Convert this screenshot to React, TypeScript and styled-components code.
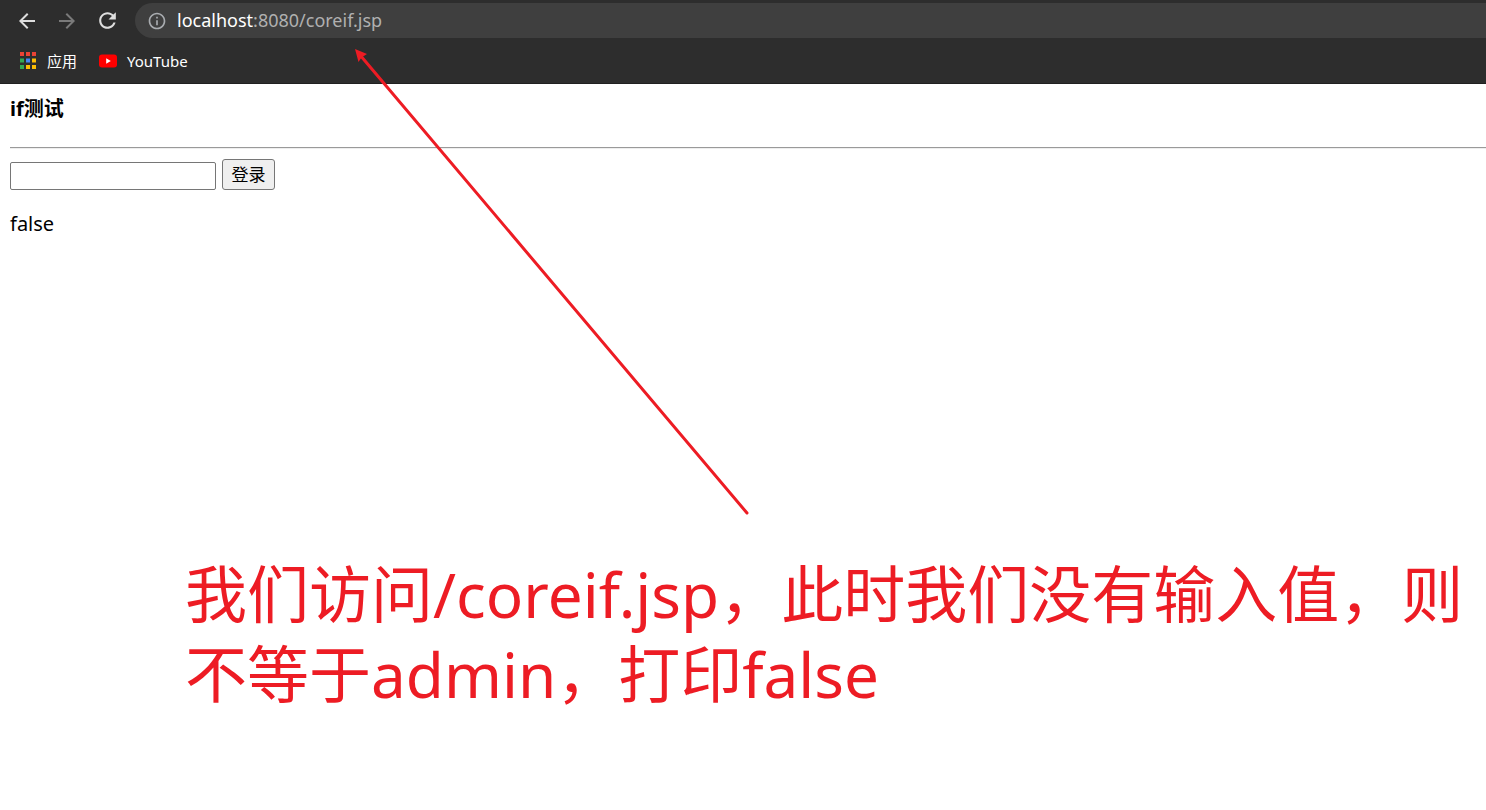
import React from "react";
import styled, { createGlobalStyle } from "styled-components";

const GlobalStyle = createGlobalStyle`
  * { box-sizing: border-box; }
  body {
    margin: 0;
    background: #ffffff;
    color: #000000;
    font-family: "Noto Sans", "Noto Sans CJK SC", sans-serif;
  }
`;

const Screen = styled.div`
  position: relative;
  min-height: 100vh;
  overflow: hidden;
`;

const BrowserChrome = styled.header`
  background: #2d2d2d;
  border-bottom: 1px solid #202020;
`;

const Toolbar = styled.div`
  display: flex;
  align-items: center;
  padding: 3px 0 0 7px;
`;

const ToolButton = styled.button<{ $muted?: boolean }>`
  display: grid;
  place-items: center;
  width: 40px;
  height: 35px;
  padding: 0;
  border: 0;
  background: none;
  color: ${(p) => (p.$muted ? "#7a7a7a" : "#dedede")};
`;

const Omnibox = styled.div`
  flex: 1;
  display: flex;
  align-items: center;
  gap: 10px;
  height: 35px;
  margin-left: 8px;
  padding-left: 12px;
  border-radius: 18px 0 0 18px;
  background: #3f3f3f;
  color: #a9acb0;
`;

const Url = styled.div`
  padding-bottom: 2px;
  color: #b0b0b0;
  font-size: 18px;
  line-height: 28px;
  outline: none;
`;

const Host = styled.span`
  color: #ffffff;
`;

const Bookmarks = styled.nav`
  display: flex;
  align-items: center;
  gap: 22px;
  height: 45px;
  padding-left: 19px;
`;

const Bookmark = styled.a`
  display: flex;
  align-items: center;
  gap: 10px;
  color: #ffffff;
  font-size: 15px;
  line-height: 28px;
  text-decoration: none;
`;

const Page = styled.main`
  padding: 11px 0 24px 10px;
`;

const Heading = styled.h3`
  margin: 0;
  font-size: 20px;
  line-height: 28px;
`;

const Rule = styled.hr`
  height: 2px;
  margin: 24px 0 10px;
  border: 0;
  border-top: 1px solid #9a9a9a;
  border-bottom: 1px solid #eeeeee;
`;

const LoginForm = styled.form`
  display: flex;
  align-items: flex-end;
  gap: 6px;
`;

const NameInput = styled.input`
  width: 206px;
  height: 28px;
  padding: 1px 4px;
  border: 1px solid #767676;
  border-radius: 2px;
  background: #ffffff;
  font: inherit;
`;

const SubmitButton = styled.button`
  width: 53px;
  height: 31px;
  padding: 0;
  border: 1px solid #767676;
  border-radius: 3px;
  background: #efefef;
  color: #000000;
  font-family: inherit;
  font-size: 17px;
  line-height: 28px;
`;

const Result = styled.p`
  margin: 20px 0 0;
  font-size: 20px;
  line-height: 28px;
`;

const Note = styled.p`
  margin: 316px 0 0;
  padding-left: 175px;
  color: #ed1c24;
  font-size: 62px;
  line-height: 80px;
  white-space: nowrap;
`;

const Pointer = styled.svg`
  position: absolute;
  left: 350px;
  top: 45px;
  pointer-events: none;
`;

const appDots = [
  ["#ea4335", "#ea4335", "#ea4335"],
  ["#34a853", "#4285f4", "#fbbc05"],
  ["#34a853", "#fbbc05", "#fbbc05"],
];

const AppsIcon = () => (
  <svg width="18" height="18" viewBox="0 0 18 18" aria-hidden="true">
    {appDots.map((row, y) =>
      row.map((fill, x) => (
        <rect key={`${x}-${y}`} x={1 + x * 6} y={y * 6.5} width="4" height="4" fill={fill} />
      ))
    )}
  </svg>
);

const YouTubeIcon = () => (
  <svg width="18" height="14" viewBox="0 0 18 14" aria-hidden="true">
    <rect width="18" height="13" y="0.5" rx="3" fill="#ff0000" />
    <path d="M7.2 4.3v5.4L11.8 7z" fill="#ffffff" />
  </svg>
);

export default function App() {
  return (
    <Screen lang="zh-CN">
      <GlobalStyle />
      <BrowserChrome>
        <Toolbar>
          <ToolButton aria-label="后退">
            <svg width="24" height="24" viewBox="0 0 24 24" fill="currentColor">
              <path d="M20 11H7.83l5.59-5.59L12 4l-8 8 8 8 1.41-1.41L7.83 13H20v-2z" />
            </svg>
          </ToolButton>
          <ToolButton aria-label="前进" $muted>
            <svg width="24" height="24" viewBox="0 0 24 24" fill="currentColor">
              <path d="M12 4l-1.41 1.41L16.17 11H4v2h12.17l-5.58 5.59L12 20l8-8z" />
            </svg>
          </ToolButton>
          <ToolButton aria-label="重新加载">
            <svg width="25" height="25" viewBox="0 0 24 24" fill="currentColor">
              <path d="M17.65 6.35C16.2 4.9 14.21 4 12 4c-4.42 0-7.99 3.58-7.99 8s3.57 8 7.99 8c3.73 0 6.84-2.55 7.73-6h-2.08c-.82 2.33-3.04 4-5.65 4-3.31 0-6-2.69-6-6s2.69-6 6-6c1.66 0 3.14.69 4.22 1.78L13 11h7V4l-2.35 2.35z" />
            </svg>
          </ToolButton>
          <Omnibox>
            <svg width="20" height="20" viewBox="0 0 24 24" fill="currentColor" aria-hidden="true">
              <path d="M11 7h2v2h-2zm0 4h2v6h-2zm1-9C6.48 2 2 6.48 2 12s4.48 10 10 10 10-4.48 10-10S17.52 2 12 2zm0 18c-4.41 0-8-3.59-8-8s3.59-8 8-8 8 3.59 8 8-3.59 8-8 8z" />
            </svg>
            <Url role="textbox" aria-label="地址栏" tabIndex={0}>
              <Host>localhost</Host>:8080/coreif.jsp
            </Url>
          </Omnibox>
        </Toolbar>
        <Bookmarks>
          <Bookmark href="#apps">
            <AppsIcon />
            应用
          </Bookmark>
          <Bookmark href="#youtube">
            <YouTubeIcon />
            YouTube
          </Bookmark>
        </Bookmarks>
      </BrowserChrome>
      <Page>
        <Heading>if测试</Heading>
        <Rule />
        <LoginForm onSubmit={(e) => e.preventDefault()}>
          <NameInput type="text" name="username" aria-label="用户名" />
          <SubmitButton type="submit">登录</SubmitButton>
        </LoginForm>
        <Result>false</Result>
        <Note>
          我们访问/coreif.jsp，此时我们没有输入值，则
          <br />
          不等于admin，打印false
        </Note>
      </Page>
      <Pointer width="400" height="472" viewBox="0 0 400 472" aria-hidden="true">
        <path d="M10 10L397 468" stroke="#ed1c24" strokeWidth="3" strokeLinecap="round" />
        <path d="M5 4L17 9L11.5 12.5L8.5 17z" fill="#ed1c24" />
      </Pointer>
    </Screen>
  );
}
